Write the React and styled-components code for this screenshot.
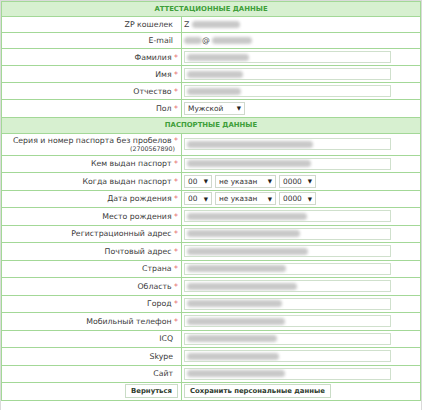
import React from 'react';
import styled, { createGlobalStyle } from 'styled-components';

const GlobalStyle = createGlobalStyle`
  body {
    margin: 0;
    background: #fff;
    font-family: 'DejaVu Sans', Verdana, sans-serif;
  }
`;

const Frame = styled.div`
  width: 420px;
  border: 1px solid #dadada;
  border-bottom: none;
  padding-bottom: 10px;
`;

const Table = styled.table`
  width: 100%;
  border-collapse: collapse;
  font-size: 7.8px;
  color: #3a3a3a;
`;

const Row = styled.tr`
  height: ${p => p.$h || 17}px;
`;

const Head = styled.td`
  background: #d7f0d0;
  border: 1px solid #a3d897;
  color: #3f9f3a;
  font-size: 6.9px;
  font-weight: bold;
  text-align: center;
  padding: 0;
`;

const Label = styled.td`
  width: 176px;
  border: 1px solid #a3d897;
  text-align: right;
  padding: 0 3px 0 0;
  white-space: nowrap;
  vertical-align: middle;
`;

const Value = styled.td`
  border: 1px solid #a3d897;
  padding: 0 0 0 2px;
  vertical-align: middle;
`;

const Star = styled.span`
  color: #e0504a;
`;

const Hint = styled.div`
  font-size: 6.3px;
  line-height: 7px;
  margin-right: 3px;
`;

const Box = styled.div`
  box-sizing: border-box;
  width: 207px;
  height: 12px;
  border: 1px solid #cfe0cc;
  background: #fff;
  display: flex;
  align-items: center;
  padding-left: 2px;
  overflow: hidden;
`;

const Selects = styled.div`
  display: flex;
  gap: 3px;
`;

const SelectBox = styled.div`
  box-sizing: border-box;
  width: ${p => p.$w}px;
  height: 13px;
  border: 1px solid #cfd8cc;
  background: #fff;
  display: flex;
  align-items: center;
  justify-content: space-between;
  padding: 0 3px;
  font-size: 7.4px;
  color: #333;
`;

const Arrow = styled.span`
  font-size: 5.5px;
  color: #222;
`;

const Blur = styled.span`
  display: inline-block;
  width: ${p => p.$w}px;
  height: 7px;
  margin-left: ${p => p.$ml || 0}px;
  border-radius: 4px;
  background: #c8c8c8;
  filter: blur(1.6px);
  vertical-align: middle;
`;

const Plain = styled.div`
  display: flex;
  align-items: center;
  color: #444;
`;

const Button = styled.button`
  box-sizing: border-box;
  height: 14px;
  padding: 0 5px;
  border: 1px solid #c9dcc6;
  background: #fff;
  font-family: 'DejaVu Sans', Verdana, sans-serif;
  font-size: 6.9px;
  font-weight: bold;
  color: #2e3b2e;
  cursor: pointer;
`;

const Field = ({ label, req, children, h, hint }) => (
  <Row $h={h}>
    <Label>
      {label}
      {req ? <Star> *</Star> : <span>&nbsp;&nbsp;</span>}
      {hint && <Hint>{hint}</Hint>}
    </Label>
    <Value>{children}</Value>
  </Row>
);

const TextBox = ({ w }) => (
  <Box>
    <Blur $w={w} />
  </Box>
);

const Select = ({ w, text }) => (
  <SelectBox $w={w}>
    <span>{text}</span>
    <Arrow>▼</Arrow>
  </SelectBox>
);

const DateSelect = () => (
  <Selects>
    <Select w={28} text="00" />
    <Select w={61} text="не указан" />
    <Select w={37} text="0000" />
  </Selects>
);

export default function App() {
  return (
    <>
      <GlobalStyle />
      <Frame>
        <Table>
          <tbody>
            <Row $h={15}>
              <Head colSpan={2}>АТТЕСТАЦИОННЫЕ ДАННЫЕ</Head>
            </Row>
            <Field label="ZP кошелек" h={16}>
              <Plain>Z<Blur $w={48} $ml={3} /></Plain>
            </Field>
            <Field label="E-mail" h={16}>
              <Plain><Blur $w={18} />@<Blur $w={40} $ml={2} /></Plain>
            </Field>
            <Field label="Фамилия" req>
              <TextBox w={62} />
            </Field>
            <Field label="Имя" req>
              <TextBox w={56} />
            </Field>
            <Field label="Отчество" req>
              <TextBox w={54} />
            </Field>
            <Field label="Пол" req h={17.5}>
              <Select w={61} text="Мужской" />
            </Field>
            <Row $h={16}>
              <Head colSpan={2}>ПАСПОРТНЫЕ ДАННЫЕ</Head>
            </Row>
            <Field label="Серия и номер паспорта без пробелов" req h={22} hint="(2700567890)">
              <TextBox w={126} />
            </Field>
            <Field label="Кем выдан паспорт" req h={17.5}>
              <TextBox w={124} />
            </Field>
            <Field label="Когда выдан паспорт" req h={17.5}>
              <DateSelect />
            </Field>
            <Field label="Дата рождения" req h={17.5}>
              <DateSelect />
            </Field>
            <Field label="Место рождения" req h={17.5}>
              <TextBox w={120} />
            </Field>
            <Field label="Регистрационный адрес" req h={17.5}>
              <TextBox w={113} />
            </Field>
            <Field label="Почтовый адрес" req h={17.5}>
              <TextBox w={121} />
            </Field>
            <Field label="Страна" req h={17.5}>
              <TextBox w={99} />
            </Field>
            <Field label="Область" req h={17.5}>
              <TextBox w={110} />
            </Field>
            <Field label="Город" req h={17.5}>
              <TextBox w={95} />
            </Field>
            <Field label="Мобильный телефон" req h={17.5}>
              <TextBox w={98} />
            </Field>
            <Field label="ICQ" h={17.5}>
              <TextBox w={90} />
            </Field>
            <Field label="Skype" h={17.5}>
              <TextBox w={92} />
            </Field>
            <Field label="Сайт" h={17.5}>
              <TextBox w={98} />
            </Field>
            <Row $h={17.5}>
              <Label><Button>Вернуться</Button></Label>
              <Value><Button>Сохранить персональные данные</Button></Value>
            </Row>
          </tbody>
        </Table>
      </Frame>
    </>
  );
}
